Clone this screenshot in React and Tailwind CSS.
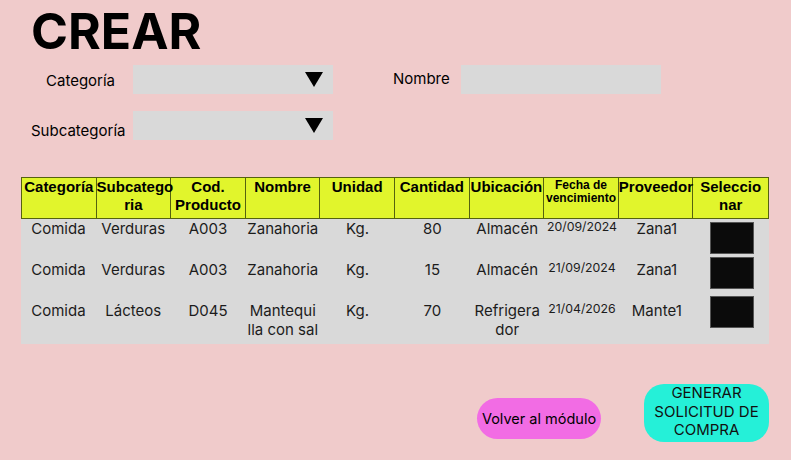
import React from 'react';

const columns = [
  ['Categoría'],
  ['Subcatego', 'ria'],
  ['Cod.', 'Producto'],
  ['Nombre'],
  ['Unidad'],
  ['Cantidad'],
  ['Ubicación'],
  ['Fecha de', 'vencimiento'],
  ['Proveedor'],
  ['Seleccio', 'nar'],
];

const rows = [
  { cat: 'Comida', sub: 'Verduras', cod: 'A003', nombre: ['Zanahoria'], unidad: 'Kg.', cantidad: '80', ubic: ['Almacén'], fecha: '20/09/2024', prov: 'Zana1', h: 'h-[41px]', box: 'mt-[3px]' },
  { cat: 'Comida', sub: 'Verduras', cod: 'A003', nombre: ['Zanahoria'], unidad: 'Kg.', cantidad: '15', ubic: ['Almacén'], fecha: '21/09/2024', prov: 'Zana1', h: 'h-[41px]', box: 'mt-[-3px]' },
  { cat: 'Comida', sub: 'Lácteos', cod: 'D045', nombre: ['Mantequi', 'lla con sal'], unidad: 'Kg.', cantidad: '70', ubic: ['Refrigera', 'dor'], fecha: '21/04/2026', prov: 'Mante1', h: 'h-[43px]', box: 'mt-[-5px]' },
];

const Lines = ({ lines }) => (
  <>
    {lines.map((l, i) => (
      <div key={i}>{l}</div>
    ))}
  </>
);

const Triangle = () => (
  <svg width="18" height="15" viewBox="0 0 18 15">
    <polygon points="0,0 18,0 9,15" fill="#000" />
  </svg>
);

const App = () => {
  return (
    <div className="w-[791px] h-[460px] bg-[#f0cbcb] overflow-hidden text-black font-['Inter',sans-serif]">
      {/* Title */}
      <h1 className="pt-[7px] pl-[31px] text-[50px] leading-[49px] font-bold">CREAR</h1>

      {/* Filters */}
      <div className="flex items-center mt-[9px]">
        <div className="w-[133px] pl-[46px] text-[15px] leading-[19px] pt-[2px]">Categoría</div>
        <div className="w-[200px] h-[29px] bg-[#d9d9d9] flex items-center justify-end pr-[10px]">
          <Triangle />
        </div>
        <div className="ml-[60px] w-[68px] text-[15px] leading-[19px] pb-[2px]">Nombre</div>
        <div className="w-[200px] h-[29px] bg-[#d9d9d9]"></div>
      </div>

      <div className="flex items-center mt-[17px]">
        <div className="w-[133px] pl-[31px] text-[15px] leading-[19px] pt-[9px]">Subcategoría</div>
        <div className="w-[200px] h-[29px] bg-[#d9d9d9] flex items-center justify-end pr-[10px]">
          <Triangle />
        </div>
      </div>

      {/* Table */}
      <div className="ml-[21px] mt-[37px] w-[748px]">
        <div className="grid grid-cols-10 h-[42px] bg-[#e1f52c] border border-[#55620f] font-['Liberation_Sans',Arial,sans-serif] font-bold text-center">
          {columns.map((c, i) => (
            <div
              key={i}
              className={`border-r border-[#55620f] last:border-r-0 overflow-visible whitespace-nowrap ${i === 7 ? 'text-[12px] leading-[13px] pt-[1px]' : 'text-[15px] leading-[18px]'}`}
            >
              <Lines lines={c} />
            </div>
          ))}
        </div>
        <div className="bg-[#d9d9d9] text-[15px] leading-[19px] text-[#1c1c1c] text-center">
          {rows.map((r, i) => (
            <div key={i} className={`grid grid-cols-10 ${r.h}`}>
              <div>{r.cat}</div>
              <div>{r.sub}</div>
              <div>{r.cod}</div>
              <div><Lines lines={r.nombre} /></div>
              <div>{r.unidad}</div>
              <div>{r.cantidad}</div>
              <div><Lines lines={r.ubic} /></div>
              <div className="text-[12.3px] leading-[16px]">{r.fecha}</div>
              <div>{r.prov}</div>
              <div className="flex justify-center">
                <div className={`w-[44px] h-[32px] bg-[#0b0b0b] border border-[#555] ${r.box}`}></div>
              </div>
            </div>
          ))}
        </div>
      </div>

      {/* Buttons */}
      <div className="flex justify-end items-start mt-[40px] pr-[22px] gap-[43px]">
        <button className="mt-[14px] w-[124px] h-[41px] rounded-full bg-[#f26ce4] text-[14.5px] leading-[19px] text-black">
          Volver al módulo
        </button>
        <button className="w-[125px] h-[58px] rounded-[20px] bg-[#25f0d8] text-[15px] leading-[18.5px] pb-[3px] text-[#111] uppercase">
          GENERAR<br />SOLICITUD DE<br />COMPRA
        </button>
      </div>
    </div>
  );
};

export default App;
